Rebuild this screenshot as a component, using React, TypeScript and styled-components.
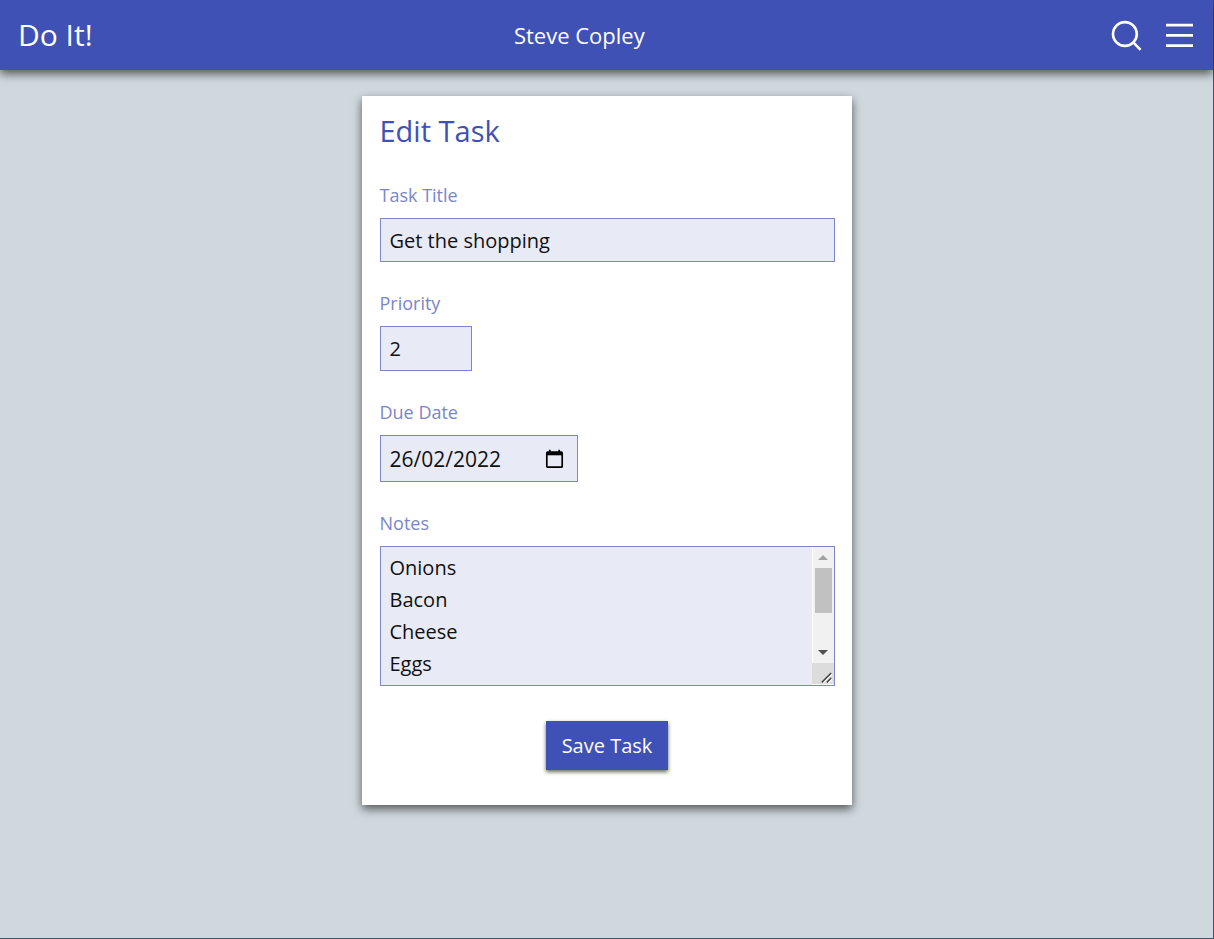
import React from 'react';
import styled, { createGlobalStyle } from 'styled-components';

const colors = {
  primary: '#3f51b5',
  primarySoft: '#7986cb',
  field: '#e8eaf6',
  page: '#cfd8dd',
  edge: '#3f566a',
};

const GlobalStyle = createGlobalStyle`
  *, *::before, *::after {
    box-sizing: border-box;
  }

  body {
    margin: 0;
    font-family: "Segoe UI", "Open Sans", "Noto Sans", sans-serif;
    font-size: 20px;
    background: ${colors.page};
  }
`;

const Page = styled.div`
  display: flex;
  flex-direction: column;
  min-height: 100vh;
  border-right: 1px solid ${colors.edge};
  border-bottom: 1px solid ${colors.edge};
`;

const Header = styled.header`
  display: grid;
  grid-template-columns: auto 1fr minmax(128px, auto);
  align-items: center;
  height: 70px;
  padding: 0 19px 0 18px;
  color: #fff;
  background: ${colors.primary};
  box-shadow: 0 4px 9px rgba(0, 0, 0, 0.6);
`;

const Brand = styled.a`
  font-size: 30px;
  font-weight: 400;
  line-height: 44px;
  color: inherit;
  text-decoration: none;
`;

const UserName = styled.p`
  margin: 0;
  font-size: 22px;
  line-height: 32px;
  text-align: center;
`;

const Actions = styled.nav`
  display: flex;
  justify-content: flex-end;
  gap: 22px;
`;

const IconButton = styled.button`
  display: flex;
  padding: 0;
  border: 0;
  color: inherit;
  background: none;
  cursor: pointer;
`;

const Main = styled.main`
  display: flex;
  justify-content: center;
  padding: 26px 16px;
`;

const Card = styled.form`
  display: flex;
  flex-direction: column;
  width: 100%;
  max-width: 490px;
  padding: 18px 17px 35px 18px;
  background: #fff;
  box-shadow: 0 4px 9px rgba(0, 0, 0, 0.6);
`;

const Title = styled.h1`
  margin: 0 0 33px;
  font-size: 29px;
  font-weight: 400;
  line-height: 34px;
  color: ${colors.primary};
`;

const Field = styled.div`
  display: flex;
  flex-direction: column;
  align-items: flex-start;
  gap: 9px;
  margin-bottom: 27px;

  &:last-of-type {
    margin-bottom: 35px;
  }
`;

const Label = styled.label`
  font-size: 18px;
  line-height: 28px;
  color: ${colors.primarySoft};
`;

const Input = styled.input`
  width: 100%;
  height: 44px;
  padding: 0 9px;
  border: 1px solid ${colors.primarySoft};
  border-radius: 0;
  outline: 0;
  font: inherit;
  color: #111;
  background: ${colors.field};
`;

const NumberInput = styled(Input)`
  width: 92px;
  height: 45px;
`;

const DateBox = styled.div`
  display: flex;
  align-items: center;
  width: 198px;
  height: 47px;
  padding-right: 13px;
  border: 1px solid ${colors.primarySoft};
  background: ${colors.field};
`;

const DateInput = styled.input`
  flex: 1;
  min-width: 0;
  padding: 0 9px;
  border: 0;
  outline: 0;
  font: inherit;
  font-size: 21px;
  color: #111;
  background: none;
`;

const DateButton = styled(IconButton)`
  color: #000;
`;

const NotesBox = styled.div`
  display: flex;
  width: 100%;
  height: 140px;
  border: 1px solid ${colors.primarySoft};
  background: ${colors.field};
`;

const TextArea = styled.textarea`
  flex: 1;
  min-width: 0;
  padding: 5px 9px;
  border: 0;
  outline: 0;
  overflow-y: scroll;
  scrollbar-width: none;
  resize: none;
  font: inherit;
  line-height: 32px;
  color: #111;
  background: none;
`;

const Scrollbar = styled.div`
  display: flex;
  flex-direction: column;
  width: 22px;
  border-bottom: 1px solid #fff;
  background: #f1f1f1;
`;

const Track = styled.div`
  display: flex;
  flex: 1;
  flex-direction: column;
  align-items: center;
  border-left: 1px solid #fff;
`;

const ArrowBox = styled.div<{ $dim?: boolean }>`
  display: flex;
  align-items: center;
  justify-content: center;
  height: 21px;
  color: ${({ $dim }) => ($dim ? '#a3a3a3' : '#505050')};
`;

const Thumb = styled.div`
  width: 17px;
  height: 45px;
  margin-bottom: auto;
  background: #c1c1c1;
`;

const Resizer = styled.div`
  display: flex;
  align-items: flex-end;
  justify-content: flex-end;
  height: 21px;
  padding: 0 2px 1px 0;
  background: #dcdcdc;
`;

const SaveButton = styled.button`
  align-self: center;
  height: 49px;
  padding: 0 16px;
  border: 0;
  font: inherit;
  color: #fff;
  background: ${colors.primary};
  box-shadow: 0 2px 4px rgba(0, 0, 0, 0.6);
  cursor: pointer;
`;

const SearchIcon = () => (
  <svg width="32" height="32" viewBox="0 0 32 32" fill="none" stroke="currentColor" strokeWidth="2.6" aria-hidden="true">
    <circle cx="13.9" cy="15" r="11.9" />
    <path d="M22 23.2L29.6 30.8" />
  </svg>
);

const MenuIcon = () => (
  <svg width="29" height="32" viewBox="0 0 29 32" fill="none" stroke="currentColor" strokeWidth="2.8" aria-hidden="true">
    <path d="M1 6.2H28M1 16.4H28M1 26.7H28" />
  </svg>
);

const CalendarIcon = () => (
  <svg width="19" height="20" viewBox="0 0 19 20" fill="none" stroke="currentColor" strokeWidth="1.7" aria-hidden="true">
    <rect x="1.8" y="3" width="15.4" height="15.2" rx="1" />
    <path d="M1.8 4.6H17.2" strokeWidth="3.4" />
    <path d="M4.8 0.8V3M14.2 0.8V3" />
  </svg>
);

const Arrow = ({ up = false }: { up?: boolean }) => (
  <svg width="10" height="5" viewBox="0 0 10 5" fill="currentColor">
    <path d={up ? 'M0 5L5 0L10 5z' : 'M0 0L5 5L10 0z'} />
  </svg>
);

const Grip = () => (
  <svg width="11" height="11" viewBox="0 0 11 11" fill="none" strokeWidth="1.5">
    <path d="M2 11L11 2M7 11L11 7" stroke="#fff" />
    <path d="M0.8 10.4L10.2 1M5.8 10.4L10.2 6" stroke="#444" />
  </svg>
);

const notes = ['Onions', 'Bacon', 'Cheese', 'Eggs', '', '', ''].join('\n');

export default function App() {
  return (
    <>
      <GlobalStyle />
      <Page>
        <Header>
          <Brand href="#">Do It!</Brand>
          <UserName>Steve Copley</UserName>
          <Actions>
            <IconButton type="button" aria-label="Search">
              <SearchIcon />
            </IconButton>
            <IconButton type="button" aria-label="Menu">
              <MenuIcon />
            </IconButton>
          </Actions>
        </Header>
        <Main>
          <Card onSubmit={(event: React.FormEvent) => event.preventDefault()}>
            <Title>Edit Task</Title>
            <Field>
              <Label htmlFor="title">Task Title</Label>
              <Input id="title" type="text" defaultValue="Get the shopping" />
            </Field>
            <Field>
              <Label htmlFor="priority">Priority</Label>
              <NumberInput id="priority" type="number" defaultValue={2} />
            </Field>
            <Field>
              <Label htmlFor="due">Due Date</Label>
              <DateBox>
                <DateInput id="due" type="text" inputMode="numeric" defaultValue="26/02/2022" />
                <DateButton type="button" aria-label="Choose date">
                  <CalendarIcon />
                </DateButton>
              </DateBox>
            </Field>
            <Field>
              <Label htmlFor="notes">Notes</Label>
              <NotesBox>
                <TextArea id="notes" defaultValue={notes} />
                <Scrollbar aria-hidden="true">
                  <Track>
                    <ArrowBox $dim>
                      <Arrow up />
                    </ArrowBox>
                    <Thumb />
                    <ArrowBox>
                      <Arrow />
                    </ArrowBox>
                  </Track>
                  <Resizer>
                    <Grip />
                  </Resizer>
                </Scrollbar>
              </NotesBox>
            </Field>
            <SaveButton type="submit">Save Task</SaveButton>
          </Card>
        </Main>
      </Page>
    </>
  );
}
